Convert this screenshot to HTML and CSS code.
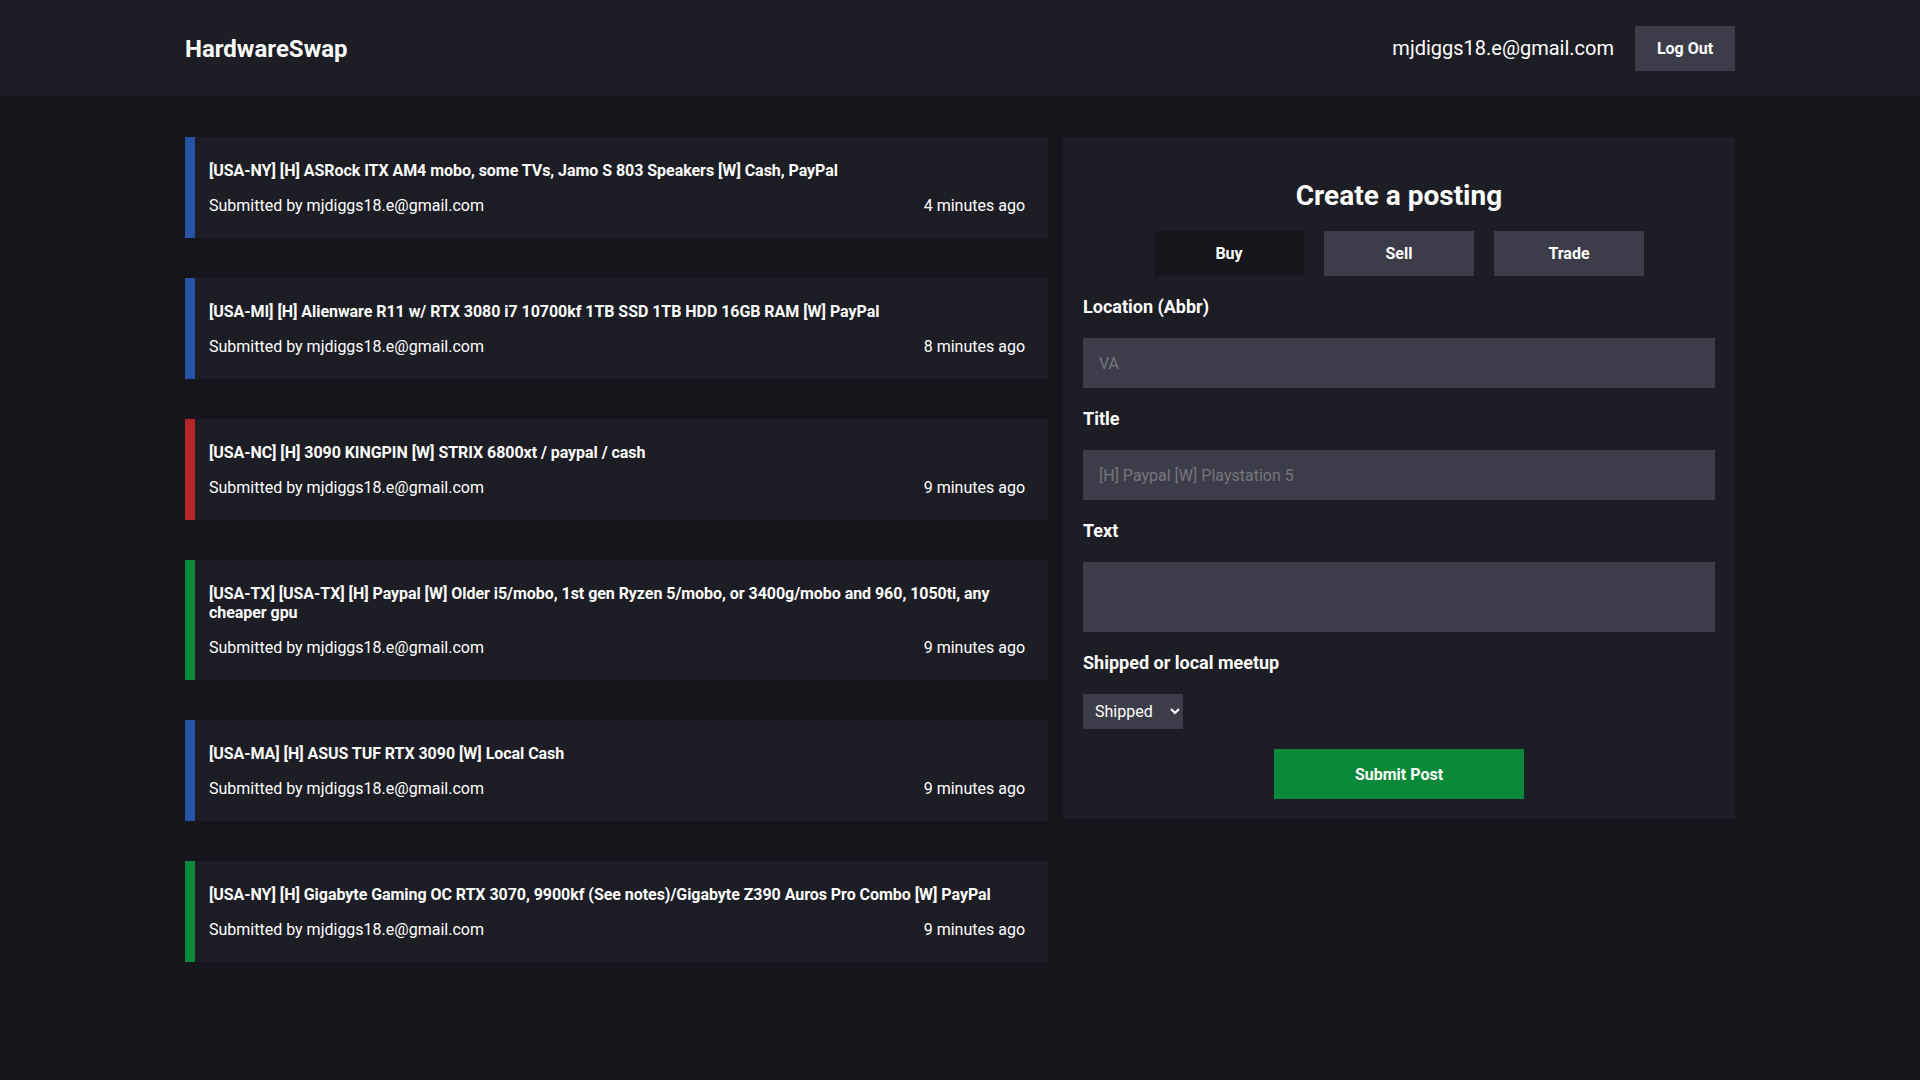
FILE: index.html
```html
<!DOCTYPE html>
<html lang="en">
<head>
<meta charset="utf-8">
<title>HardwareSwap</title>
<link rel="stylesheet" href="styles.css">
</head>
<body>
<header class="topbar">
  <div class="container topbar-inner">
    <div class="logo">HardwareSwap</div>
    <div class="user">
      <span class="user-email">mjdiggs18.e@gmail.com</span>
      <button class="btn btn-grey logout">Log Out</button>
    </div>
  </div>
</header>
<main class="container layout">
  <section class="posts">
    <article class="post post-blue">
      <div class="post-title">[USA-NY] [H] ASRock ITX AM4 mobo, some TVs, Jamo S 803 Speakers [W] Cash, PayPal</div>
      <div class="post-meta"><span>Submitted by mjdiggs18.e@gmail.com</span><span>4 minutes ago</span></div>
    </article>
    <article class="post post-blue">
      <div class="post-title">[USA-MI] [H] Alienware R11 w/ RTX 3080 i7 10700kf 1TB SSD 1TB HDD 16GB RAM [W] PayPal</div>
      <div class="post-meta"><span>Submitted by mjdiggs18.e@gmail.com</span><span>8 minutes ago</span></div>
    </article>
    <article class="post post-red">
      <div class="post-title">[USA-NC] [H] 3090 KINGPIN [W] STRIX 6800xt / paypal / cash</div>
      <div class="post-meta"><span>Submitted by mjdiggs18.e@gmail.com</span><span>9 minutes ago</span></div>
    </article>
    <article class="post post-green">
      <div class="post-title">[USA-TX] [USA-TX] [H] Paypal [W] Older i5/mobo, 1st gen Ryzen 5/mobo, or 3400g/mobo and 960, 1050ti, any cheaper gpu</div>
      <div class="post-meta"><span>Submitted by mjdiggs18.e@gmail.com</span><span>9 minutes ago</span></div>
    </article>
    <article class="post post-blue">
      <div class="post-title">[USA-MA] [H] ASUS TUF RTX 3090 [W] Local Cash</div>
      <div class="post-meta"><span>Submitted by mjdiggs18.e@gmail.com</span><span>9 minutes ago</span></div>
    </article>
    <article class="post post-green">
      <div class="post-title">[USA-NY] [H] Gigabyte Gaming OC RTX 3070, 9900kf (See notes)/Gigabyte Z390 Auros Pro Combo [W] PayPal</div>
      <div class="post-meta"><span>Submitted by mjdiggs18.e@gmail.com</span><span>9 minutes ago</span></div>
    </article>
  </section>
  <aside class="panel">
    <h2 class="panel-title">Create a posting</h2>
    <div class="type-tabs">
      <button class="btn tab tab-active">Buy</button>
      <button class="btn btn-grey tab">Sell</button>
      <button class="btn btn-grey tab">Trade</button>
    </div>
    <label class="field-label" for="loc">Location (Abbr)</label>
    <input class="field-input" id="loc" type="text" placeholder="VA">
    <label class="field-label" for="title">Title</label>
    <input class="field-input" id="title" type="text" placeholder="[H] Paypal [W] Playstation 5">
    <label class="field-label" for="text">Text</label>
    <textarea class="field-input field-text" id="text"></textarea>
    <label class="field-label" for="ship">Shipped or local meetup</label>
    <div class="select-row">
      <select class="field-select" id="ship">
        <option>Shipped</option>
        <option>Local</option>
      </select>
    </div>
    <div class="submit-row">
      <button class="btn btn-green submit">Submit Post</button>
    </div>
  </aside>
</main>
</body>
</html>
```
FILE: styles.css
```css
* { box-sizing: border-box; }
html, body { margin: 0; padding: 0; }
body {
  background: #15161b;
  color: #ffffff;
  font-family: Roboto, "Liberation Sans", sans-serif;
  font-size: 16px;
}
.container {
  width: 1550px;
  margin: 0 auto;
}
.topbar {
  background: #1d1d25;
  height: 96px;
}
.topbar-inner {
  height: 100%;
  display: flex;
  align-items: center;
  justify-content: space-between;
}
.logo {
  font-size: 24px;
  font-weight: 700;
  line-height: 28px;
  padding-top: 2px;
}
.user {
  display: flex;
  align-items: center;
  gap: 21px;
}
.user-email {
  font-size: 20px;
  line-height: 24px;
}
.btn {
  border: none;
  color: #ffffff;
  font-family: Roboto, "Liberation Sans", sans-serif;
  font-size: 16px;
  font-weight: 700;
  cursor: pointer;
  padding: 0;
}
.btn-grey { background: #3d3d49; }
.btn-green { background: #088838; }
.logout {
  width: 100px;
  height: 45px;
}
.layout {
  display: grid;
  grid-template-columns: 863px 672px;
  gap: 15px;
  align-items: start;
  padding-top: 41px;
}
.posts {
  display: flex;
  flex-direction: column;
  gap: 40px;
}
.post {
  background: #1d1d25;
  border-left: 10px solid #2653a6;
  padding: 24px 23px 23px 14px;
}
.post-blue { border-left-color: #2653a6; }
.post-red { border-left-color: #b3262a; }
.post-green { border-left-color: #088838; }
.post-title {
  font-weight: 700;
  line-height: 19px;
  letter-spacing: -0.05px;
}
.post-meta {
  margin-top: 16px;
  line-height: 19px;
  display: flex;
  justify-content: space-between;
}
.panel {
  background: #1d1d25;
  padding: 20px;
  display: flex;
  flex-direction: column;
  gap: 20px;
}
.panel-title {
  margin: 23px 0 0;
  font-size: 28px;
  line-height: 31px;
  font-weight: 700;
  text-align: center;
}
.type-tabs {
  display: flex;
  justify-content: center;
  gap: 20px;
}
.tab {
  width: 150px;
  height: 45px;
}
.tab-active { background: #16161c; }
.field-label {
  font-size: 18px;
  font-weight: 700;
  line-height: 22px;
}
.field-input {
  display: block;
  width: 100%;
  height: 50px;
  background: #3d3d49;
  border: none;
  outline: none;
  color: #ffffff;
  font-family: Roboto, "Liberation Sans", sans-serif;
  font-size: 16px;
  padding: 0 16px;
}
.field-input::placeholder { color: #75757c; }
.field-text {
  height: 70px;
  resize: none;
  padding: 12px 16px;
}
.select-row { display: flex; }
.field-select {
  width: 100px;
  height: 35px;
  background: #3d3d49;
  color: #ffffff;
  border: none;
  border-radius: 0;
  outline: none;
  font-family: Roboto, "Liberation Sans", sans-serif;
  font-size: 16px;
  padding: 0 6px 0 8px;
}
.submit-row {
  display: flex;
  justify-content: center;
}
.submit {
  width: 250px;
  height: 50px;
}
```
